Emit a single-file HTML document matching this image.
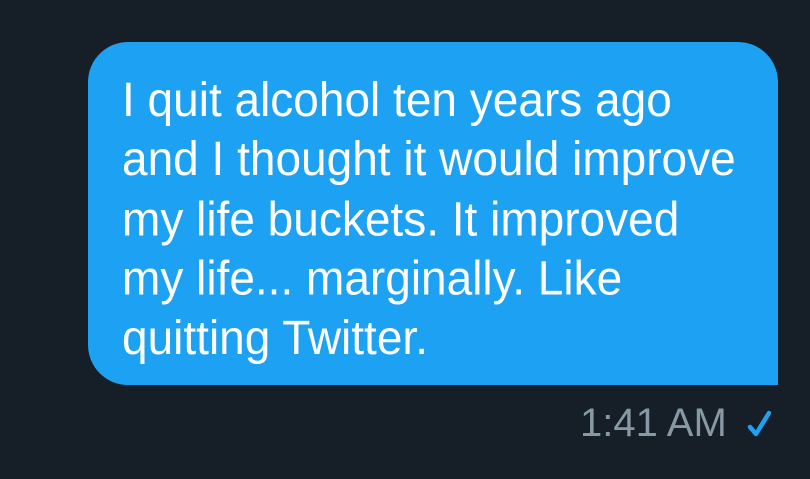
<!DOCTYPE html>
<html><head><style>
html,body{margin:0;padding:0;width:810px;height:479px;background:#161e27;overflow:hidden}
.b{position:absolute;left:88px;top:42px;width:690px;height:343px;background:#1da1f2;border-radius:40px 40px 0 40px}
.t{position:absolute;left:122px;top:70px;font-family:"Liberation Sans",sans-serif;font-size:46px;line-height:57.3px;color:#fff;white-space:nowrap;transform:scaleY(1.04);transform-origin:0 0}
.ts{position:absolute;left:580px;top:401px;font-family:"Liberation Sans",sans-serif;font-size:40px;color:#8899a6;white-space:nowrap}
svg{position:absolute;left:744px;top:406px}
</style></head><body>
<div class="b"></div>
<div class="t">I quit alcohol ten years ago<br>and I thought it would improve<br>my life buckets. It improved<br>my life... marginally. Like<br>quitting Twitter.</div>
<div class="ts">1:41 AM</div>
<svg width="30" height="34" viewBox="0 0 30 34"><path d="M6 21 L12 28 L25 7" fill="none" stroke="#1da1f2" stroke-width="4.5" stroke-linecap="round" stroke-linejoin="round"/></svg>
</body></html>
